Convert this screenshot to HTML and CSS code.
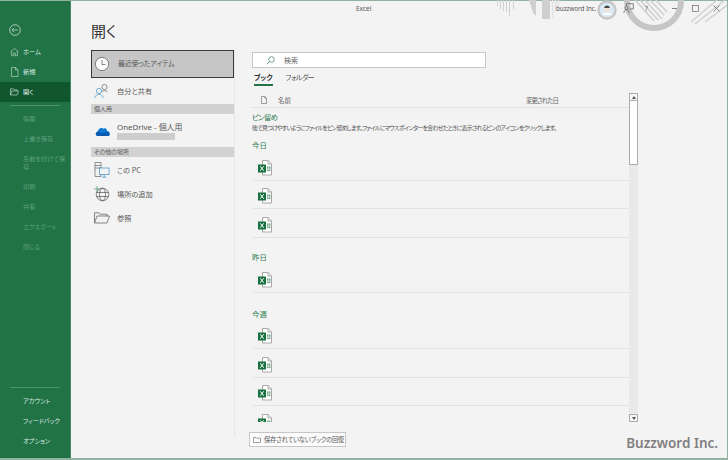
FILE: index.html
```html
<!DOCTYPE html>
<html lang="ja">
<head>
<meta charset="utf-8">
<title>Excel</title>
<link rel="stylesheet" href="styles.css">
</head>
<body>
<svg width="0" height="0" class="defs">
  <symbol id="xl" viewBox="0 0 14 16">
    <path d="M4.5 .5H10L13.5 4V15H4.5Z" fill="#fff" stroke="#a8a8a8"/>
    <path d="M10 .5V4H13.5" fill="none" stroke="#a8a8a8"/>
    <rect x="9" y="6.5" width="3.4" height="4.6" fill="#5f9a78"/>
    <path d="M9 8.2h3.4M9 9.6h3.4M10.6 6.5v4.6" stroke="#fff" stroke-width=".5"/>
    <rect x="0" y="4.5" width="8" height="8" fill="#17713f"/>
    <path d="M2.3 6.3L5.7 10.7M5.7 6.3L2.3 10.7" stroke="#fff" stroke-width="1"/>
  </symbol>
</svg>
<div class="window">
  <aside class="sidebar">
    <div class="back">
      <svg width="12" height="12" viewBox="0 0 12 12"><circle cx="6" cy="6" r="5.3" fill="none" stroke="#c8dfd1" stroke-width=".8"/><path d="M3 6h6M5.300 3.800L3 6l2.300 2.200" fill="none" stroke="#c8dfd1" stroke-width=".7"/></svg>
    </div>
    <a class="nav">
      <svg class="nav-icon" width="9" height="9" viewBox="0 0 9 9"><path d="M.5 4.500L4.500 .8l4 3.700M1.700 3.600V8.500H3.700V5.600H5.300V8.500H7.300V3.600" fill="none" stroke="#c8dfd1" stroke-width=".6"/></svg>
      <span class="nav-label">ホーム</span>
    </a>
    <a class="nav">
      <svg class="nav-icon" width="9" height="10" viewBox="0 0 9 10"><path d="M1.500 .5H5.500L8 3V9.500H1.500ZM5.500 .5V3H8" fill="none" stroke="#c8dfd1" stroke-width=".6"/></svg>
      <span class="nav-label">新規</span>
    </a>
    <a class="nav nav-active">
      <svg class="nav-icon" width="9" height="8" viewBox="0 0 9 8"><path d="M.5 7V.8H3.300L4 1.800H7V3M.5 7L2 3H8.600L7.200 7Z" fill="none" stroke="#d8e8de" stroke-width=".6"/></svg>
      <span class="nav-label">開く</span>
    </a>
    <div class="sep sep-top"></div>
    <a class="nav nav-off"><span class="nav-label">情報</span></a>
    <a class="nav nav-off"><span class="nav-label">上書き保存</span></a>
    <a class="nav nav-off nav-wrap"><span class="nav-label">名前を付けて保<br>存</span></a>
    <a class="nav nav-off"><span class="nav-label">印刷</span></a>
    <a class="nav nav-off"><span class="nav-label">共有</span></a>
    <a class="nav nav-off"><span class="nav-label">エクスポート</span></a>
    <a class="nav nav-off"><span class="nav-label">閉じる</span></a>
    <div class="sep sep-bottom"></div>
    <a class="nav"><span class="nav-label">アカウント</span></a>
    <a class="nav"><span class="nav-label">フィードバック</span></a>
    <a class="nav"><span class="nav-label">オプション</span></a>
  </aside>

  <main class="main">
    <svg class="decor" width="238" height="34" viewBox="490 0 238 34">
      <g stroke="#d0d0d0" fill="none">
        <path d="M498.500 0v6M501.500 0v9M504.500 0v11M507.500 0v12M510.500 0v16M514.500 0v9" stroke-width="1"/>
        <path d="M530 0h7v16l-3-3z" fill="#d0d0d0" stroke="none"/>
        <path d="M543 0h8v19h-8z" fill="#cfcfcf" stroke="none"/>
        <path d="M553.500 0v18M556.500 0v12M559.500 0v8" stroke="#e2e2e2" stroke-width="1.500"/>
        <circle cx="655" cy="1" r="27" stroke="#c6c6c6" stroke-width="6"/>
        <path d="M636 0l19 21M641 0l18 20M646 0l17 19M651 0l14 15M657 0l11 12" stroke-width="1.500"/>
        <path d="M692 22L718 0M696 24L726 0M706 22L728 5" stroke-width="1.500"/>
      </g>
      <circle cx="608" cy="10" r="8.500" fill="#dbe9f4" stroke="#c6c6c6" stroke-width="2.400"/>
      <circle cx="608" cy="9" r="2.800" fill="#f3e3d6"/>
      <path d="M605.200 8c0-3.500 5.600-3.500 5.600 0z" fill="#444"/>
      <path d="M603 15c1-3.500 9-3.500 10 0z" fill="#fff"/>
    </svg>
    <div class="titlebar">
      <span class="app-name">Excel</span>
      <span class="user">buzzword Inc.</span>
      <svg class="win-icon win-coauth" width="11" height="11" viewBox="0 0 11 11"><path d="M3.500 .7H10.300V6H6.500M3.500 .7V3M1 10c0-2.300 1-3.300 2.500-3.300S6 7.700 6 10" fill="none" stroke="#666" stroke-width=".8"/><circle cx="3.500" cy="5" r="1.700" fill="none" stroke="#666" stroke-width=".8"/></svg>
      <span class="win-help">?</span>
      <svg class="win-icon win-min" width="7" height="7" viewBox="0 0 7 7"><path d="M1 3.500H6" stroke="#666" stroke-width=".8"/></svg>
      <svg class="win-icon win-max" width="7" height="7" viewBox="0 0 7 7"><rect x=".5" y=".5" width="6" height="6" fill="none" stroke="#666" stroke-width=".7"/></svg>
      <svg class="win-icon win-close" width="7" height="7" viewBox="0 0 7 7"><path d="M.5 .5L6.500 6.500M6.500 .5L.5 6.500" stroke="#666" stroke-width=".7"/></svg>
    </div>
    <h1 class="page-title">開く</h1>
    <div class="columns">
      <nav class="places">
        <a class="place place-recent">
          <svg class="place-icon" width="16" height="16" viewBox="0 0 16 16"><circle cx="8" cy="8" r="6.600" fill="#fbfbfb" stroke="#555" stroke-width=".7"/><path d="M8 4V8.500H11.500" fill="none" stroke="#555" stroke-width=".7"/></svg>
          <span class="place-recent-label">最近使ったアイテム</span>
        </a>
        <a class="place place-share">
          <svg class="place-icon" width="16" height="16" viewBox="0 0 16 16"><circle cx="10.500" cy="4" r="2.600" fill="none" stroke="#666" stroke-width=".7"/><path d="M7.500 9c.8-1.800 5-1.800 6 0" fill="none" stroke="#666" stroke-width=".7"/><circle cx="5" cy="8" r="2.600" fill="none" stroke="#3f8fc4" stroke-width=".7"/><path d="M1 15c0-5 8-5 8 0" fill="none" stroke="#3f8fc4" stroke-width=".7"/></svg>
          <span>自分と共有</span>
        </a>
        <div class="group">個人用</div>
        <a class="place place-drive">
          <svg class="place-icon" width="15" height="10" viewBox="0 0 15 10"><path d="M3 10C.5 10 0 6.500 2.500 5.700 3.500 2 6.500 1 8.500 2.700 10.500 1.700 12 3 12 5 14 5 15.500 7 14.500 9c-.3.700-1 1-1.700 1Z" fill="#0f78d4"/><path d="M3 10C.5 10 0 7 2 6c2-.8 3 .2 4.500 1.500L11 6c1.800-.8 3.800 1 3.500 3-.3.700-1 1-1.700 1Z" fill="#0a5cb0"/></svg>
          <span class="drive-text">
            <span>OneDrive - 個人用</span>
            <span class="drive-mail"></span>
          </span>
        </a>
        <div class="group">その他の場所</div>
        <a class="place place-row">
          <svg class="place-icon" width="16" height="16" viewBox="0 0 16 16"><path d="M1 .5H7V14.500H1ZM1 3.500H7M1 6H7" fill="#f3f3f3" stroke="#666" stroke-width=".7"/><rect x="5.500" y="6" width="9.500" height="6.500" fill="#f3f3f3" stroke="#3f8fc4" stroke-width=".7"/><path d="M10.200 12.500V15M8 15.200H12.500" stroke="#3f8fc4" stroke-width=".7"/></svg>
          <span>この PC</span>
        </a>
        <a class="place place-row">
          <svg class="place-icon" width="16" height="16" viewBox="0 0 16 16"><circle cx="8.500" cy="8.500" r="6.300" fill="none" stroke="#555" stroke-width=".7"/><ellipse cx="8.500" cy="8.500" rx="3" ry="6.300" fill="none" stroke="#555" stroke-width=".7"/><path d="M2.500 6.500H14.500M2.500 10.500H14.500" stroke="#555" stroke-width=".7"/><path d="M3 0V6M0 3H6" stroke="#5d9c78" stroke-width=".8"/></svg>
          <span>場所の追加</span>
        </a>
        <a class="place place-row">
          <svg class="place-icon" width="16" height="12" viewBox="0 0 16 12"><path d="M.5 11V.8H5L6.200 2.200H13V4M.5 11L3 4H15.500L13 11Z" fill="none" stroke="#555" stroke-width=".7"/></svg>
          <span>参照</span>
        </a>
      </nav>
      <section class="files">
        <div class="search">
          <svg class="search-icon" width="9" height="9" viewBox="0 0 9 9"><circle cx="5.500" cy="3.500" r="2.800" fill="none" stroke="#3e7f5d" stroke-width=".7"/><path d="M3.500 5.500L.8 8.300" stroke="#3e7f5d" stroke-width=".8"/></svg>
          <span>検索</span>
        </div>
        <div class="tabs">
          <span class="tab tab-on">ブック</span>
          <span class="tab tab-folder">フォルダー</span>
        </div>
        <div class="browser">
          <div class="list">
            <div class="list-head">
              <svg class="head-icon" width="6" height="8" viewBox="0 0 6 8"><path d="M.5 .5H3.800L5.500 2.200V7.500H.5ZM3.800 .5V2.200H5.500" fill="none" stroke="#777" stroke-width=".7"/></svg>
              <span class="head-name">名前</span>
              <span class="head-date">変更された日</span>
            </div>
            <div class="pin-title">ピン留め</div>
            <div class="pin-text">後で見つけやすいようにファイルをピン留めします。ファイルにマウス ポインターを合わせたときに表示されるピンのアイコンをクリックします。</div>
            <div class="when when-today">今日</div>
            <div class="row"><svg class="xl"><use href="#xl"/></svg></div>
            <div class="row"><svg class="xl"><use href="#xl"/></svg></div>
            <div class="row"><svg class="xl"><use href="#xl"/></svg></div>
            <div class="when when-yesterday">昨日</div>
            <div class="row"><svg class="xl"><use href="#xl"/></svg></div>
            <div class="when when-week">今週</div>
            <div class="row"><svg class="xl"><use href="#xl"/></svg></div>
            <div class="row"><svg class="xl"><use href="#xl"/></svg></div>
            <div class="row"><svg class="xl"><use href="#xl"/></svg></div>
            <div class="row"><svg class="xl"><use href="#xl"/></svg></div>
          </div>
          <div class="scrollbar">
            <div class="sb-btn"><svg width="4" height="3" viewBox="0 0 4 3"><path d="M2 0L4 3H0Z" fill="#555"/></svg></div>
            <div class="sb-thumb"></div>
            <div class="sb-track"></div>
            <div class="sb-btn"><svg width="4" height="3" viewBox="0 0 4 3"><path d="M2 3L4 0H0Z" fill="#555"/></svg></div>
          </div>
        </div>
        <div class="actions">
          <button class="recover">
            <svg class="recover-icon" width="8" height="6" viewBox="0 0 8 6"><path d="M.5 5.500V.5H3L3.700 1.200H7.500V5.500Z" fill="none" stroke="#777" stroke-width=".7"/></svg>
            <span>保存されていないブックの回復</span>
          </button>
          <span class="brand">Buzzword Inc.</span>
        </div>
      </section>
    </div>
  </main>
</div>
</body>
</html>
```
FILE: styles.css
```css
* { box-sizing: border-box; }
html, body { margin: 0; padding: 0; }
body {
  width: 728px;
  height: 460px;
  overflow: hidden;
  font-family: "Noto Sans CJK JP", "Noto Sans", sans-serif;
  font-feature-settings: "palt";
  color: #505050;
  background: #f3f3f3;
}
.defs { position: absolute; }
.window {
  display: flex;
  height: 460px;
  border-top: 1px solid #8fb3a0;
  border-right: 1px solid #8fb3a0;
  border-bottom: 2px solid #8fb3a0;
}

/* Sidebar */
.sidebar {
  width: 71px;
  flex: none;
  display: flex;
  flex-direction: column;
  background: #217346;
  color: #dbe9e1;
  padding: 19px 0 7px;
  border-right: 1px solid #3d8a60;
}
.back { height: 20px; display: flex; align-items: center; padding-left: 9px; margin-bottom: 2px; }
.nav {
  height: 20px;
  display: flex;
  align-items: center;
  font-size: 6.2px;
  line-height: 8.5px;
  position: relative;
  padding-left: 23px;
}
.nav-icon { position: absolute; left: 10px; top: 50%; transform: translateY(-50%); }
.nav-active { background: #10572f; color: #eef5f1; }
.nav-off { color: #5fa07e; }
.nav-wrap { height: 28px; }
.sep { height: 1px; background: #4e9270; margin-left: 10px; margin-right: 10px; flex: none; }
.sep-top { margin-top: 3px; margin-bottom: 3px; }
.sep-bottom { margin-top: auto; margin-bottom: 3px; }

/* Main */
.main { flex: 1; position: relative; padding-left: 20px; min-width: 0; }
.decor { position: absolute; right: 0; top: -1px; }
.titlebar {
  position: absolute;
  left: 0;
  right: 0;
  top: 0;
  height: 16px;
  font-size: 6.5px;
  color: #555;
  font-family: "Noto Sans", "Noto Sans CJK JP", sans-serif;
}
.app-name { position: absolute; left: 285px; top: 3px; line-height: 9px; }
.user { position: absolute; left: 485px; top: 3px; line-height: 9px; font-size: 6.2px; }
.win-icon { position: absolute; }
.win-coauth { left: 552px; top: 2px; }
.win-help { position: absolute; left: 574px; top: 3px; line-height: 9px; color: #666; }
.win-min { left: 600px; top: 4px; }
.win-max { left: 621px; top: 4px; }
.win-close { left: 642px; top: 4px; }
.page-title {
  margin: 0;
  padding-top: 20px;
  height: 40px;
  font-size: 15px;
  line-height: 20px;
  font-weight: 400;
  color: #333;
}
.columns { display: flex; margin-top: 9px; }

/* Places */
.places {
  width: 144px;
  flex: none;
  height: 387px;
  border-right: 1px solid #e6e6e6;
  font-size: 7.2px;
  color: #555;
}
.place { display: flex; align-items: center; }
.place-icon { flex: none; }
.place-recent {
  height: 28px;
  background: #c6c6c6;
  border: 1px solid #3a3a3a;
  width: 143px;
  padding-left: 2px;
  padding-bottom: 2px;
}
.place-recent .place-icon { margin-right: 8px; margin-top: 2px; }
.place-recent-label { font-size: 7px; letter-spacing: -0.2px; }
.place-share { height: 26px; padding-left: 3px; padding-bottom: 1px; }
.place-share .place-icon { margin-right: 7px; }
.group {
  height: 10px;
  width: 143px;
  background: #d2d2d2;
  font-size: 6px;
  line-height: 10px;
  padding-left: 3px;
  color: #555;
}
.place-drive { height: 33px; padding-left: 4px; }
.place-drive .place-icon { margin-right: 7px; margin-top: 1px; }
.drive-text { display: flex; flex-direction: column; font-size: 7.9px; font-family: "Noto Sans", "Noto Sans CJK JP", sans-serif; line-height: 11px; }
.drive-mail { display: block; width: 58px; height: 7px; background: #cdcdcd; }
.place-row { height: 24px; padding-left: 3px; padding-top: 1px; }
.place-row .place-icon { margin-right: 7px; }

/* Files */
.files { width: 478px; flex: none; margin-left: 14px; }
.search {
  height: 16px;
  width: 234px;
  margin: 2px 0 0 3px;
  background: #fff;
  border: 1px solid #c6c6c6;
  display: flex;
  align-items: center;
  padding-left: 13px;
  font-size: 7px;
  color: #666;
}
.search-icon { margin-right: 9px; }
.tabs { display: flex; gap: 14px; margin: 2px 0 0 5px; height: 17px; font-size: 7px; }
.tab { height: 17px; line-height: 15px; }
.tab-folder { letter-spacing: -0.5px; margin-left: -1px; }
.tab-on { font-weight: 700; color: #333; border-bottom: 2px solid #217346; line-height: 15px; height: 16px; }
.browser { display: flex; margin-top: 6px; height: 329px; padding-left: 3px; }
.list { width: 377px; flex: none; overflow: hidden; }
.list-head {
  height: 15px;
  display: flex;
  align-items: center;
  border-bottom: 1px solid #e2e2e2;
  font-size: 6.4px;
  color: #666;
  padding-left: 9px;
}
.head-icon { margin-right: 11px; flex: none; }
.head-name { width: 248px; }
.head-date { letter-spacing: -0.9px; }
.pin-title { margin-top: 3px; height: 12px; line-height: 12px; font-size: 7.2px; letter-spacing: -0.5px; color: #2b7a50; }
.pin-text { height: 10px; line-height: 10px; font-size: 5.9px; letter-spacing: -0.7px; color: #505050; white-space: nowrap; }
.when { height: 12px; line-height: 12px; font-size: 7.4px; color: #2b7a50; }
.when-today { margin-top: 6px; margin-bottom: 1.3px; }
.when-yesterday { margin-top: 13.5px; margin-bottom: 1px; }
.when-week { margin-top: 15px; margin-bottom: 1px; }
.row {
  height: 28.5px;
  display: flex;
  align-items: center;
  padding: 3px 0 0 5px;
  margin-left: 1px;
  border-bottom: 1px solid #e2e2e2;
}
.xl { width: 14px; height: 16px; flex: none; }
.scrollbar { width: 9px; flex: none; display: flex; flex-direction: column; background: #e9e9e9; }
.sb-btn {
  height: 8px;
  background: #f6f6f6;
  border: 1px solid #ababab;
  display: flex;
  align-items: center;
  justify-content: center;
  flex: none;
}
.sb-thumb { height: 64px; background: #fff; border: 1px solid #ababab; border-top: 0; flex: none; }
.sb-track { flex: 1; }
.actions { display: flex; align-items: flex-start; justify-content: space-between; margin-top: 10px; height: 16px; padding-right: 9px; }
.recover {
  height: 15px;
  width: 97px;
  background: #fbfbfb;
  border: 1px solid #c6c6c6;
  display: flex;
  align-items: center;
  gap: 3px;
  padding: 0 0 0 3px;
  font: inherit;
  font-feature-settings: "palt";
  font-size: 6.3px;
  letter-spacing: -0.2px;
  color: #555;
  white-space: nowrap;
}
.recover-icon { flex: none; }
.brand {
  font-family: "Noto Sans", sans-serif;
  font-size: 13.5px;
  font-weight: 600;
  line-height: 22px;
  color: #808080;
}
```
